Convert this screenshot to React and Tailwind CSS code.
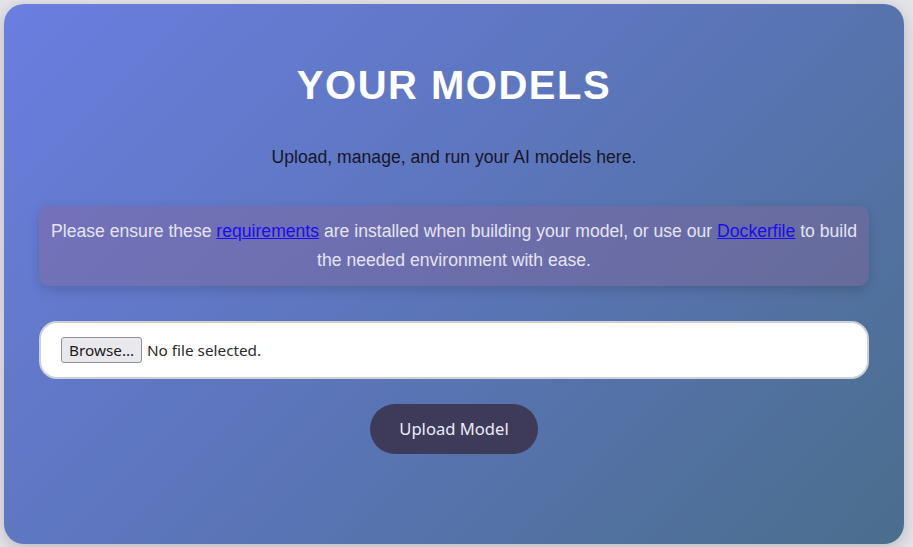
export default function App() {
  return (
    <div className="w-[913px] h-[547px] bg-[#e3e3e8] p-[4px] overflow-hidden">
      <div className="w-[900px] h-[540px] rounded-[20px] bg-[linear-gradient(135deg,#6a7ee0_0%,#5b75b9_50%,#4a6e8c_100%)] shadow-[0_4px_16px_rgba(0,0,0,0.18)] px-[35px] flex flex-col items-center">
        <h1 className="mt-[58px] h-[46px] leading-[46px] text-[40px] font-bold tracking-[1.5px] text-white font-['Liberation_Sans',Arial,sans-serif]">
          YOUR MODELS
        </h1>
        <p className="mt-[35px] leading-[28px] text-[17.6px] text-[#16162a] font-['Liberation_Sans',Arial,sans-serif]">
          Upload, manage, and run your AI models here.
        </p>
        <div className="mt-[35px] w-full h-[80px] rounded-[10px] bg-[rgba(135,100,150,0.4)] shadow-[0_4px_12px_rgba(0,0,0,0.15)] px-[8px] flex items-center justify-center">
          <p className="text-center leading-[29px] text-[17.6px] text-[#e4e4f4] font-['Liberation_Sans',Arial,sans-serif]">
            Please ensure these <a href="#" className="text-[#1a0dee] underline">requirements</a> are installed when building your model, or use our <a href="#" className="text-[#1a0dee] underline">Dockerfile</a> to build the needed environment with ease.
          </p>
        </div>
        <div className="mt-[35px] w-full h-[58px] rounded-[18px] bg-white border-2 border-[#cfcfd6] px-[20px] flex items-center gap-[5px] font-['Noto_Sans',sans-serif] text-[15.3px] text-[#2a2a2a]">
          <span className="h-[26px] px-[7px] flex items-center rounded-[3px] border border-[#8f8f9d] bg-[#e9e9ed] text-[#1b1b1b]">
            Browse…
          </span>
          <span>No file selected.</span>
        </div>
        <button className="mt-[25px] h-[50px] w-[168px] rounded-full bg-[#3d3a5a] text-[#ececf4] text-[16.6px] font-['Noto_Sans',sans-serif]">
          Upload Model
        </button>
      </div>
    </div>
  );
}
